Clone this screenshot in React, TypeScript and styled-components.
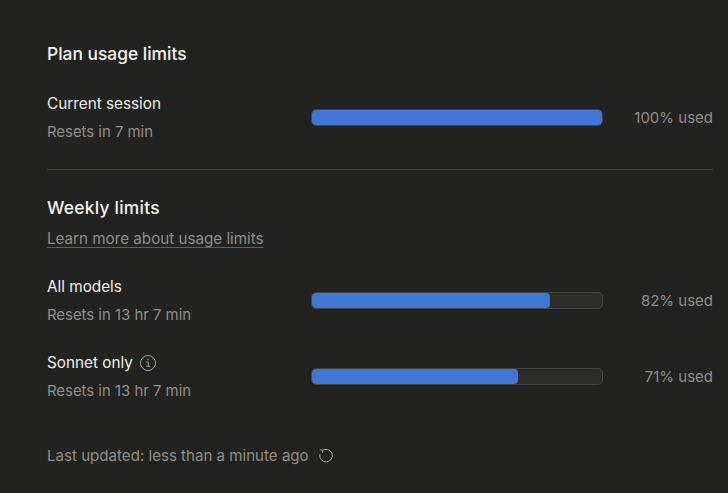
import React from "react";
import styled, { createGlobalStyle } from "styled-components";

const Global = createGlobalStyle`
  html, body { margin: 0; padding: 0; background: #222221; }
  body { font-family: Inter, "Liberation Sans", sans-serif; -webkit-font-smoothing: antialiased; }
`;

const Page = styled.main`
  box-sizing: border-box;
  width: 728px;
  height: 493px;
  overflow: hidden;
  padding: 43px 15px 0 47px;
  background: #222221;
`;

const Heading = styled.h2`
  margin: 0;
  font-size: 17.4px;
  line-height: 22px;
  font-weight: 550;
  color: #f5f4ef;
`;

const Row = styled.div<{ $top: number }>`
  display: grid;
  grid-template-columns: 264px 292px 1fr;
  align-items: center;
  margin-top: ${(p) => p.$top}px;
  height: 48px;
`;

const Labels = styled.div`
  display: flex;
  flex-direction: column;
  gap: 8px;
  padding-top: 2px;
`;

const Label = styled.div`
  display: flex;
  align-items: center;
  gap: 6px;
  font-size: 15.3px;
  line-height: 20px;
  color: #f0efe9;
`;

const Sub = styled.div`
  font-size: 14.9px;
  line-height: 20px;
  color: #8f8e87;
`;

const Track = styled.div`
  box-sizing: border-box;
  height: 17px;
  border: 1px solid #44443f;
  border-radius: 5px;
  background: #2b2b2a;
  overflow: hidden;
`;

const Fill = styled.div`
  height: 100%;
  border-radius: 4px;
  background: #4077d4;
`;

const Used = styled.div`
  text-align: right;
  font-size: 15px;
  color: #8f8e87;
`;

const Divider = styled.hr`
  margin: 29px 0 0;
  border: 0;
  border-top: 1px solid #40403d;
`;

const SubHeading = styled(Heading)`
  margin-top: 27px;
  letter-spacing: 0.25px;
`;

const LearnLink = styled.a`
  display: inline-block;
  margin: 11px 0 1px;
  font-size: 15.2px;
  line-height: 17px;
  color: #8f8e87;
  text-decoration: underline;
  text-decoration-color: #5f5e59;
  text-decoration-thickness: 1px;
  text-underline-offset: 3px;
`;

const Footer = styled.div`
  display: flex;
  align-items: center;
  gap: 9px;
  margin-top: 47px;
  font-size: 15.1px;
  line-height: 20px;
  color: #8f8e87;
`;

const InfoIcon = () => (
  <svg width="18" height="18" viewBox="0 0 18 18" fill="none" stroke="#a3a29b" strokeWidth="1">
    <circle cx="9" cy="9" r="7.5" />
    <path d="M7.4 8h1.9v4M7.2 12.2h4" />
    <circle cx="9" cy="5.7" r="0.6" fill="#a3a29b" stroke="none" />
  </svg>
);

const RefreshIcon = () => (
  <svg width="16" height="16" viewBox="0 0 16 16" fill="none" stroke="#a3a29b" strokeWidth="1">
    <path d="M4.2 2.6A6.3 6.3 0 1 1 1.9 6.2" />
    <path d="M1.7 1.9h2.9v3" />
  </svg>
);

const rows = {
  session: { label: "Current session", sub: "Resets in 7 min", pct: 100 },
  all: { label: "All models", sub: "Resets in 13 hr 7 min", pct: 82 },
  sonnet: { label: "Sonnet only", sub: "Resets in 13 hr 7 min", pct: 71 },
};

const Usage = ({ top, label, sub, pct, info }: { top: number; label: string; sub: string; pct: number; info?: boolean }) => (
  <Row $top={top}>
    <Labels>
      <Label>
        {label}
        {info && <InfoIcon />}
      </Label>
      <Sub>{sub}</Sub>
    </Labels>
    <Track>
      <Fill style={{ width: `${pct}%` }} />
    </Track>
    <Used>{pct}% used</Used>
  </Row>
);

export default function App() {
  return (
    <Page>
      <Global />
      <Heading>Plan usage limits</Heading>
      <Usage top={27} {...rows.session} />
      <Divider />
      <SubHeading>Weekly limits</SubHeading>
      <LearnLink href="#">Learn more about usage limits</LearnLink>
      <Usage top={27} {...rows.all} />
      <Usage top={28} {...rows.sonnet} info />
      <Footer>
        Last updated: less than a minute ago
        <RefreshIcon />
      </Footer>
    </Page>
  );
}
